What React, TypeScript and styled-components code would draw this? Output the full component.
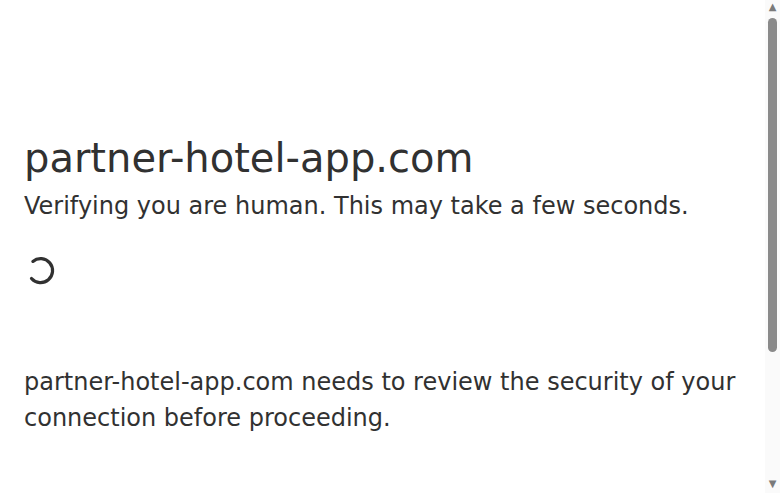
import { createGlobalStyle } from 'styled-components';
import styled from 'styled-components';

const GlobalStyle = createGlobalStyle`
  html, body {
    margin: 0;
    padding: 0;
    background: #fff;
  }
  body {
    font-family: "DejaVu Sans", "Noto Sans", sans-serif;
    color: #313131;
  }
`

const MainWrapper = styled.div`
  display: flex;
  flex-direction: column;
  padding-right: 15px;
`

const MainContent = styled.div`
  margin: 128px auto 0;
  width: 100%;
  max-width: 960px;
  padding: 0 24px;
  box-sizing: border-box;
`

const Title = styled.h1`
  margin: 0;
  font-size: 40px;
  line-height: 60px;
  font-weight: 500;
`

const Subtitle = styled.h2`
  margin: 0;
  font-size: 24px;
  line-height: 36px;
  font-weight: 500;
`

const SpinnerBox = styled.div`
  margin-top: 31px;
  width: 32px;
  height: 32px;
  display: flex;
`

const Message = styled.div`
  margin-top: 77px;
  font-size: 24px;
  line-height: 36px;
`

// window scrollbar drawn over the right edge
const ScrollTrack = styled.div`
  position: fixed;
  top: 0;
  right: 0;
  height: 493px;
  width: 15px;
  background: #fafafa;
  display: flex;
  flex-direction: column;
  align-items: center;
  z-index: 10;
`

const Arrow = styled.span<{ $down?: boolean }>`
  flex: none;
  display: block;
  font-family: "DejaVu Sans", sans-serif;
  font-size: 10px;
  line-height: 10px;
  height: 10px;
  color: #7a7a7a;
  margin-top: ${p => (p.$down ? 'auto' : '2px')};
  margin-bottom: ${p => (p.$down ? '4px' : '0')};
`

const Thumb = styled.div`
  flex: none;
  margin-top: 6px;
  width: 9px;
  height: 334px;
  border-radius: 4.5px;
  background: #8a8a8a;
`

const Spinner = () => (
  <SpinnerBox>
    <svg width="32" height="32" viewBox="0 0 32 32">
      <path
        d="M 8.9 6.4 A 12 12 0 1 1 7.5 23.5"
        fill="none"
        stroke="#313131"
        strokeWidth="3.2"
        strokeLinecap="round"
      />
    </svg>
  </SpinnerBox>
)

export default function App() {
  return (
    <>
      <GlobalStyle />
      <MainWrapper>
        <MainContent>
          <Title>partner-hotel-app.com</Title>
          <Subtitle>Verifying you are human. This may take a few seconds.</Subtitle>
          <Spinner />
          <Message>partner-hotel-app.com needs to review the security of your connection before proceeding.</Message>
        </MainContent>
      </MainWrapper>
      <ScrollTrack>
        <Arrow>▲</Arrow>
        <Thumb />
        <Arrow $down>▼</Arrow>
      </ScrollTrack>
    </>
  )
}
